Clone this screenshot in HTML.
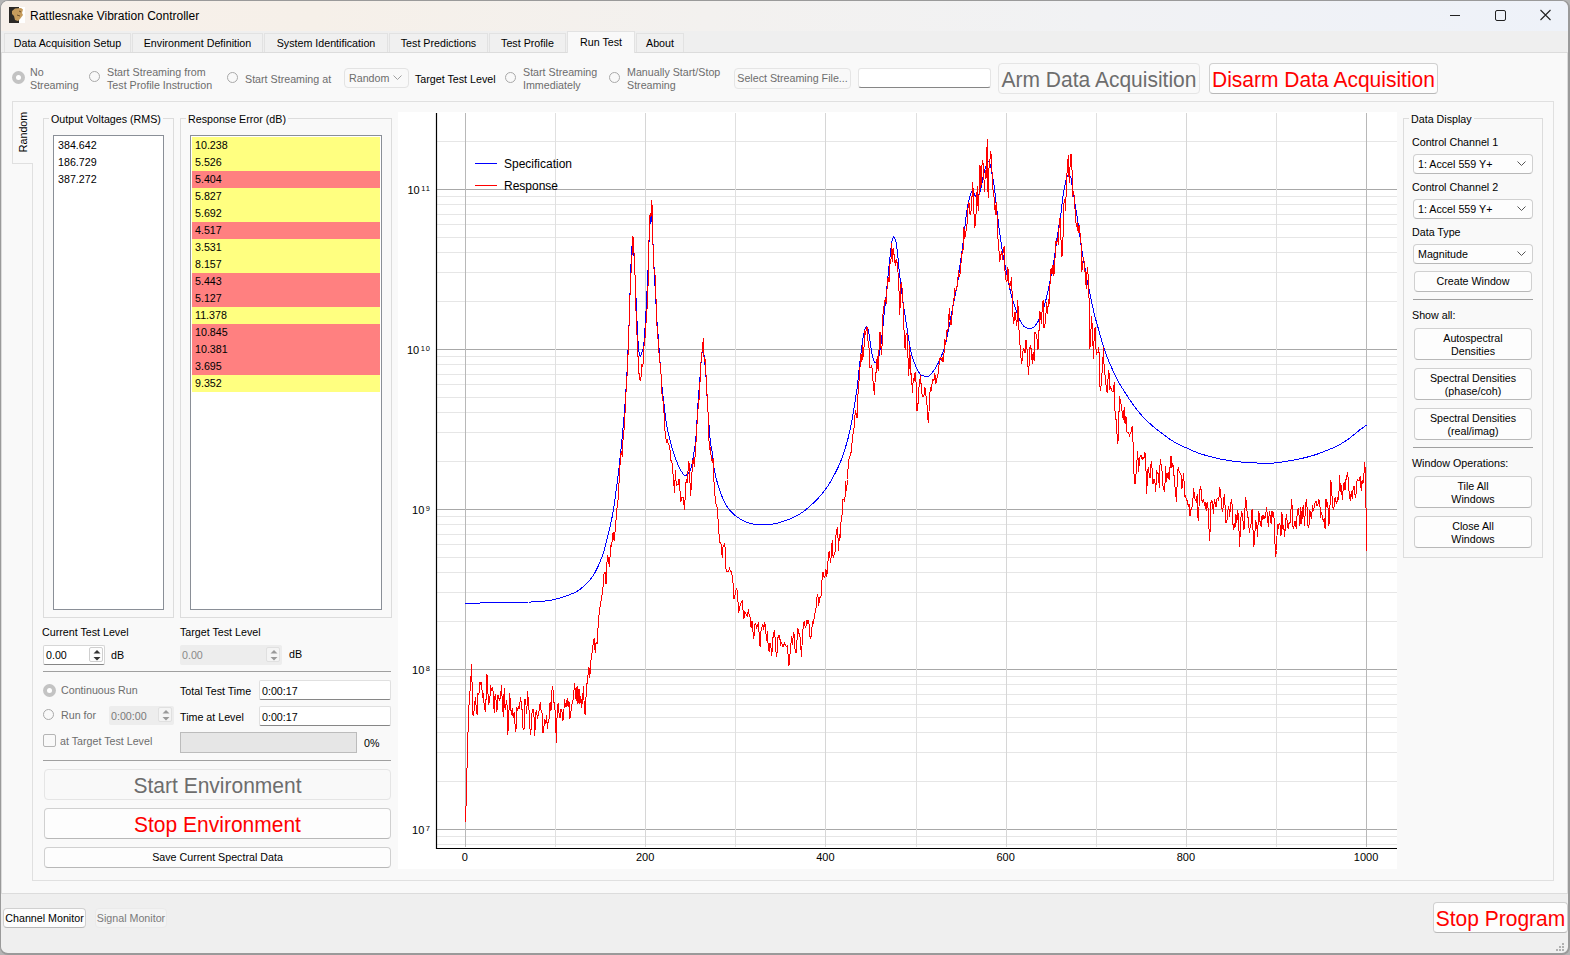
<!DOCTYPE html><html><head><meta charset="utf-8"><style>
*{margin:0;padding:0;box-sizing:border-box}
html,body{width:1570px;height:955px;overflow:hidden;background:#b5b5b5;font-family:"Liberation Sans", sans-serif;position:relative}
.t{position:absolute;white-space:nowrap;line-height:13px;font-family:"Liberation Sans", sans-serif}
.b{position:absolute;border:1px solid #d0d0d0;border-radius:4px;text-align:center;white-space:nowrap;font-family:"Liberation Sans", sans-serif;box-sizing:content-box}
#win{position:absolute;left:0;top:0;width:1570px;height:955px;background:#efefef;border:1px solid #9a9a9a;border-right-width:2px;border-bottom-width:2px;border-radius:8px}
#title{position:absolute;left:1px;top:1px;width:1567px;height:30px;border-radius:7px 7px 0 0;background:linear-gradient(90deg,#f7f0ea 0%,#f6f0e9 20%,#f3f1ef 45%,#f1f2f4 70%,#eef2f9 100%)}
.tab{position:absolute;top:33px;height:19px;background:#f0f0f0;border:1px solid #e2e2e2;border-bottom:none;font-size:10.7px;line-height:19px;text-align:center;white-space:nowrap}
.tab.sel{top:31px;height:22px;background:#f9f9f9;line-height:21px;z-index:2}
#pane{position:absolute;left:1px;top:52px;width:1567px;height:842px;background:#f9f9f9;border:1px solid #dcdcdc}
#inner{position:absolute;left:32px;top:101px;width:1522px;height:780px;background:#f9f9f9;border:1px solid #e0e0e0}
#vtab{position:absolute;left:12px;top:101px;width:21px;height:63px;background:#f9f9f9;border:1px solid #e0e0e0;border-right:none;z-index:2}
.grp{position:absolute;border:1px solid #dcdcdc}
.lst{position:absolute;background:#fff;border:1px solid #8a8f97}
</style></head><body><div id="win"></div><div id="title"></div><svg style="position:absolute;left:9px;top:7px" width="16" height="16"><rect width="16" height="16" fill="#fff"/><rect width="10" height="16" fill="#2b2825"/><path d="M3 4 L6 1.5 L12 1 L14 2.5 L13 6 L14 8 L11 12 L9 14 L6 13 L5 9 L3 7 Z" fill="#c59b5c"/><path d="M10 4 L12 5 M8 8 L11 9" stroke="#6b4e2a" stroke-width="1"/></svg><div class="t" style="left:30px;top:10px;color:#000;font-size:12px;">Rattlesnake Vibration Controller</div><svg style="position:absolute;left:1440px;top:0" width="130" height="31"><path d="M10 15.5 H20" stroke="#222" stroke-width="1"/><rect x="55.5" y="10.5" width="10" height="10" rx="1.5" fill="none" stroke="#222" stroke-width="1"/><path d="M100.5 10 L110.5 20 M110.5 10 L100.5 20" stroke="#222" stroke-width="1.1"/></svg><div class="tab" style="left:4px;width:127px">Data Acquisition Setup</div><div class="tab" style="left:132px;width:131px">Environment Definition</div><div class="tab" style="left:264px;width:124px">System Identification</div><div class="tab" style="left:389px;width:99px">Test Predictions</div><div class="tab" style="left:489px;width:77px">Test Profile</div><div class="tab" style="left:636px;width:48px">About</div><div class="tab sel" style="left:567px;width:68px">Run Test</div><div id="pane"></div><div style="position:absolute;left:12px;top:71px;width:13px;height:13px;border-radius:50%;background:#c3c3c3"><div style="position:absolute;left:4px;top:4px;width:5px;height:5px;border-radius:50%;background:#fff"></div></div><div class="t" style="left:30px;top:66px;color:#6d6d6d;font-size:10.7px;line-height:13px">No<br>Streaming</div><div style="position:absolute;left:89px;top:71px;width:11px;height:11px;border-radius:50%;border:1px solid #a9a9a9;background:#f9f9f9"></div><div class="t" style="left:107px;top:66px;color:#6d6d6d;font-size:10.7px;line-height:13px">Start Streaming from<br>Test Profile Instruction</div><div style="position:absolute;left:227px;top:72px;width:11px;height:11px;border-radius:50%;border:1px solid #a9a9a9;background:#f9f9f9"></div><div class="t" style="left:245px;top:73px;color:#6d6d6d;font-size:10.7px;">Start Streaming at</div><div class="b" style="left:344px;top:68px;width:63px;height:18px;background:#f9f9f9;border-color:#e3e3e3;border-bottom-color:#e3e3e3;color:#6d6d6d;text-align:left;line-height:18px;font-size:10.7px"><span style="padding-left:4px">Random</span><svg style="position:absolute;right:6px;top:6px" width="9" height="6"><path d="M0.5 0.5 L4.5 4.5 L8.5 0.5" fill="none" stroke="#a0a0a0" stroke-width="1"/></svg></div><div class="t" style="left:415px;top:73px;color:#000;font-size:10.7px;">Target Test Level</div><div style="position:absolute;left:505px;top:72px;width:11px;height:11px;border-radius:50%;border:1px solid #a9a9a9;background:#f9f9f9"></div><div class="t" style="left:523px;top:66px;color:#6d6d6d;font-size:10.7px;line-height:13px">Start Streaming<br>Immediately</div><div style="position:absolute;left:609px;top:72px;width:11px;height:11px;border-radius:50%;border:1px solid #a9a9a9;background:#f9f9f9"></div><div class="t" style="left:627px;top:66px;color:#6d6d6d;font-size:10.7px;line-height:13px">Manually Start/Stop<br>Streaming</div><div class="b" style="left:734px;top:68px;width:115px;height:19px;background:#f9f9f9;border-color:#e5e5e5;border-bottom-color:#e5e5e5;color:#6d6d6d;font-size:10.7px;line-height:19px;">Select Streaming File...</div><div style="position:absolute;left:858px;top:68px;width:133px;height:20px;background:#fff;border:1px solid #e5e5e5;border-bottom:1px solid #868686;border-radius:3px"></div><div class="b" style="left:998px;top:63px;width:200px;height:29px;background:#f9f9f9;border-color:#e5e5e5;border-bottom-color:#e5e5e5;color:#6d6d6d;font-size:21px;line-height:29px;"><span style="display:inline-block;transform:translateY(1px) scaleY(1.05)">Arm Data Acquisition</span></div><div class="b" style="left:1209px;top:63px;width:227px;height:29px;background:#fdfdfd;border-color:#d0d0d0;border-bottom-color:#b8b8b8;color:#ff0000;font-size:21px;line-height:29px;"><span style="display:inline-block;transform:translateY(1px) scaleY(1.05)">Disarm Data Acquisition</span></div><div id="inner"></div><div id="vtab"><div style="position:absolute;left:-18px;top:23px;width:56px;height:14px;transform:rotate(-90deg);font-size:10.7px;text-align:center;line-height:14px">Random</div></div><div class="grp" style="left:43px;top:118px;width:131px;height:500px"></div><div class="t" style="left:49px;top:113px;padding:0 2px;background:#f9f9f9;font-size:10.7px">Output Voltages (RMS)</div><div class="grp" style="left:180px;top:118px;width:212px;height:500px"></div><div class="t" style="left:186px;top:113px;padding:0 2px;background:#f9f9f9;font-size:10.7px">Response Error (dB)</div><div class="lst" style="left:53px;top:135px;width:111px;height:475px"></div><div class="lst" style="left:190px;top:135px;width:192px;height:475px"></div><div class="t" style="left:58px;top:139px;color:#000;font-size:10.7px;">384.642</div><div class="t" style="left:58px;top:156px;color:#000;font-size:10.7px;">186.729</div><div class="t" style="left:58px;top:173px;color:#000;font-size:10.7px;">387.272</div><div style="position:absolute;left:192px;top:137px;width:188px;height:17px;background:#ffff80"></div><div class="t" style="left:195px;top:139px;color:#000;font-size:10.7px;">10.238</div><div style="position:absolute;left:192px;top:154px;width:188px;height:17px;background:#ffff80"></div><div class="t" style="left:195px;top:156px;color:#000;font-size:10.7px;">5.526</div><div style="position:absolute;left:192px;top:171px;width:188px;height:17px;background:#ff8080"></div><div class="t" style="left:195px;top:173px;color:#000;font-size:10.7px;">5.404</div><div style="position:absolute;left:192px;top:188px;width:188px;height:17px;background:#ffff80"></div><div class="t" style="left:195px;top:190px;color:#000;font-size:10.7px;">5.827</div><div style="position:absolute;left:192px;top:205px;width:188px;height:17px;background:#ffff80"></div><div class="t" style="left:195px;top:207px;color:#000;font-size:10.7px;">5.692</div><div style="position:absolute;left:192px;top:222px;width:188px;height:17px;background:#ff8080"></div><div class="t" style="left:195px;top:224px;color:#000;font-size:10.7px;">4.517</div><div style="position:absolute;left:192px;top:239px;width:188px;height:17px;background:#ffff80"></div><div class="t" style="left:195px;top:241px;color:#000;font-size:10.7px;">3.531</div><div style="position:absolute;left:192px;top:256px;width:188px;height:17px;background:#ffff80"></div><div class="t" style="left:195px;top:258px;color:#000;font-size:10.7px;">8.157</div><div style="position:absolute;left:192px;top:273px;width:188px;height:17px;background:#ff8080"></div><div class="t" style="left:195px;top:275px;color:#000;font-size:10.7px;">5.443</div><div style="position:absolute;left:192px;top:290px;width:188px;height:17px;background:#ff8080"></div><div class="t" style="left:195px;top:292px;color:#000;font-size:10.7px;">5.127</div><div style="position:absolute;left:192px;top:307px;width:188px;height:17px;background:#ffff80"></div><div class="t" style="left:195px;top:309px;color:#000;font-size:10.7px;">11.378</div><div style="position:absolute;left:192px;top:324px;width:188px;height:17px;background:#ff8080"></div><div class="t" style="left:195px;top:326px;color:#000;font-size:10.7px;">10.845</div><div style="position:absolute;left:192px;top:341px;width:188px;height:17px;background:#ff8080"></div><div class="t" style="left:195px;top:343px;color:#000;font-size:10.7px;">10.381</div><div style="position:absolute;left:192px;top:358px;width:188px;height:17px;background:#ff8080"></div><div class="t" style="left:195px;top:360px;color:#000;font-size:10.7px;">3.695</div><div style="position:absolute;left:192px;top:375px;width:188px;height:17px;background:#ffff80"></div><div class="t" style="left:195px;top:377px;color:#000;font-size:10.7px;">9.352</div><div class="t" style="left:42px;top:626px;color:#000;font-size:10.7px;">Current Test Level</div><div style="position:absolute;left:43px;top:645px;width:62px;height:20px;background:#fff;border:1px solid #d6d6d6;border-bottom-color:#868686;border-radius:2px"></div><div class="t" style="left:46px;top:649px;color:#000;font-size:10.7px;">0.00</div><div style="position:absolute;left:89px;top:647px;width:14px;height:15px;background:#fdfdfd;border:1px solid #cfcfcf;border-radius:2px"></div><svg style="position:absolute;left:89px;top:647px" width="16" height="17"><path d="M4.5 6.5 L8 3 L11.5 6.5 Z" fill="#333"/><path d="M4.5 10 L8 13.5 L11.5 10 Z" fill="#333"/></svg><div class="t" style="left:111px;top:649px;color:#000;font-size:10.7px;">dB</div><div class="t" style="left:180px;top:626px;color:#000;font-size:10.7px;">Target Test Level</div><div style="position:absolute;left:180px;top:645px;width:102px;height:20px;background:#ededed;border-radius:2px"></div><div class="t" style="left:182px;top:649px;color:#8a8a8a;font-size:10.7px;">0.00</div><div style="position:absolute;left:266px;top:647px;width:14px;height:15px;background:#f4f4f4;border:1px solid #e0e0e0;border-radius:2px"></div><svg style="position:absolute;left:266px;top:647px" width="16" height="17"><path d="M4.5 6.5 L8 3 L11.5 6.5 Z" fill="#999"/><path d="M4.5 10 L8 13.5 L11.5 10 Z" fill="#999"/></svg><div class="t" style="left:289px;top:648px;color:#000;font-size:10.7px;">dB</div><div style="position:absolute;left:43px;top:671px;width:348px;height:1px;background:#a0a0a0"></div><div style="position:absolute;left:43px;top:684px;width:13px;height:13px;border-radius:50%;background:#c3c3c3"><div style="position:absolute;left:4px;top:4px;width:5px;height:5px;border-radius:50%;background:#fff"></div></div><div class="t" style="left:61px;top:684px;color:#6d6d6d;font-size:10.7px;">Continuous Run</div><div class="t" style="left:180px;top:685px;color:#000;font-size:10.7px;">Total Test Time</div><div style="position:absolute;left:259px;top:680px;width:132px;height:20px;background:#fff;border:1px solid #e0e0e0;border-bottom-color:#868686;border-radius:2px"></div><div class="t" style="left:262px;top:685px;color:#000;font-size:10.7px;">0:00:17</div><div style="position:absolute;left:43px;top:709px;width:11px;height:11px;border-radius:50%;border:1px solid #a9a9a9;background:#f9f9f9"></div><div class="t" style="left:61px;top:709px;color:#6d6d6d;font-size:10.7px;">Run for</div><div style="position:absolute;left:109px;top:706px;width:65px;height:19px;background:#ededed;border-radius:2px"></div><div class="t" style="left:111px;top:710px;color:#7a7a7a;font-size:10.7px;">0:00:00</div><div style="position:absolute;left:158px;top:707px;width:14px;height:15px;background:#f4f4f4;border:1px solid #e0e0e0;border-radius:2px"></div><svg style="position:absolute;left:158px;top:707px" width="16" height="17"><path d="M4.5 6.5 L8 3 L11.5 6.5 Z" fill="#999"/><path d="M4.5 10 L8 13.5 L11.5 10 Z" fill="#999"/></svg><div class="t" style="left:180px;top:711px;color:#000;font-size:10.7px;">Time at Level</div><div style="position:absolute;left:259px;top:706px;width:132px;height:20px;background:#fff;border:1px solid #e0e0e0;border-bottom-color:#868686;border-radius:2px"></div><div class="t" style="left:262px;top:711px;color:#000;font-size:10.7px;">0:00:17</div><div style="position:absolute;left:43px;top:734px;width:13px;height:13px;border:1px solid #b5b5b5;border-radius:2px;background:#f9f9f9"></div><div class="t" style="left:60px;top:735px;color:#6d6d6d;font-size:10.7px;">at Target Test Level</div><div style="position:absolute;left:180px;top:732px;width:177px;height:21px;background:#e6e6e6;border:1px solid #bcbcbc"></div><div class="t" style="left:364px;top:737px;color:#000;font-size:10.7px;">0%</div><div style="position:absolute;left:43px;top:760px;width:348px;height:1px;background:#a0a0a0"></div><div class="b" style="left:44px;top:769px;width:345px;height:29px;background:#f9f9f9;border-color:#e5e5e5;border-bottom-color:#e5e5e5;color:#6d6d6d;font-size:21px;line-height:29px;"><span style="display:inline-block;transform:translateY(1px) scaleY(1.05)">Start Environment</span></div><div class="b" style="left:44px;top:808px;width:345px;height:29px;background:#fdfdfd;border-color:#d0d0d0;border-bottom-color:#b8b8b8;color:#ff0000;font-size:21px;line-height:29px;"><span style="display:inline-block;transform:translateY(1px) scaleY(1.05)">Stop Environment</span></div><div class="b" style="left:44px;top:847px;width:345px;height:19px;background:#fdfdfd;border-color:#d0d0d0;border-bottom-color:#b8b8b8;color:#000;font-size:10.7px;line-height:19px;">Save Current Spectral Data</div><div style="position:absolute;left:398px;top:112px;width:999px;height:757px;background:#fff"></div><svg style="position:absolute;left:0;top:0" width="1570" height="955"><line x1="437" x2="1397" y1="844.5" y2="844.5" stroke="#e6e6e6" stroke-width="1"/><line x1="437" x2="1397" y1="836.5" y2="836.5" stroke="#e6e6e6" stroke-width="1"/><line x1="437" x2="1397" y1="829.5" y2="829.5" stroke="#a8a8a8" stroke-width="1"/><line x1="437" x2="1397" y1="781.5" y2="781.5" stroke="#e6e6e6" stroke-width="1"/><line x1="437" x2="1397" y1="752.5" y2="752.5" stroke="#e6e6e6" stroke-width="1"/><line x1="437" x2="1397" y1="732.5" y2="732.5" stroke="#e6e6e6" stroke-width="1"/><line x1="437" x2="1397" y1="717.5" y2="717.5" stroke="#e6e6e6" stroke-width="1"/><line x1="437" x2="1397" y1="704.5" y2="704.5" stroke="#e6e6e6" stroke-width="1"/><line x1="437" x2="1397" y1="694.5" y2="694.5" stroke="#e6e6e6" stroke-width="1"/><line x1="437" x2="1397" y1="684.5" y2="684.5" stroke="#e6e6e6" stroke-width="1"/><line x1="437" x2="1397" y1="676.5" y2="676.5" stroke="#e6e6e6" stroke-width="1"/><line x1="437" x2="1397" y1="669.5" y2="669.5" stroke="#a8a8a8" stroke-width="1"/><line x1="437" x2="1397" y1="621.5" y2="621.5" stroke="#e6e6e6" stroke-width="1"/><line x1="437" x2="1397" y1="592.5" y2="592.5" stroke="#e6e6e6" stroke-width="1"/><line x1="437" x2="1397" y1="572.5" y2="572.5" stroke="#e6e6e6" stroke-width="1"/><line x1="437" x2="1397" y1="557.5" y2="557.5" stroke="#e6e6e6" stroke-width="1"/><line x1="437" x2="1397" y1="544.5" y2="544.5" stroke="#e6e6e6" stroke-width="1"/><line x1="437" x2="1397" y1="534.5" y2="534.5" stroke="#e6e6e6" stroke-width="1"/><line x1="437" x2="1397" y1="524.5" y2="524.5" stroke="#e6e6e6" stroke-width="1"/><line x1="437" x2="1397" y1="516.5" y2="516.5" stroke="#e6e6e6" stroke-width="1"/><line x1="437" x2="1397" y1="509.5" y2="509.5" stroke="#a8a8a8" stroke-width="1"/><line x1="437" x2="1397" y1="461.5" y2="461.5" stroke="#e6e6e6" stroke-width="1"/><line x1="437" x2="1397" y1="432.5" y2="432.5" stroke="#e6e6e6" stroke-width="1"/><line x1="437" x2="1397" y1="412.5" y2="412.5" stroke="#e6e6e6" stroke-width="1"/><line x1="437" x2="1397" y1="397.5" y2="397.5" stroke="#e6e6e6" stroke-width="1"/><line x1="437" x2="1397" y1="384.5" y2="384.5" stroke="#e6e6e6" stroke-width="1"/><line x1="437" x2="1397" y1="374.5" y2="374.5" stroke="#e6e6e6" stroke-width="1"/><line x1="437" x2="1397" y1="364.5" y2="364.5" stroke="#e6e6e6" stroke-width="1"/><line x1="437" x2="1397" y1="356.5" y2="356.5" stroke="#e6e6e6" stroke-width="1"/><line x1="437" x2="1397" y1="349.5" y2="349.5" stroke="#a8a8a8" stroke-width="1"/><line x1="437" x2="1397" y1="301.5" y2="301.5" stroke="#e6e6e6" stroke-width="1"/><line x1="437" x2="1397" y1="272.5" y2="272.5" stroke="#e6e6e6" stroke-width="1"/><line x1="437" x2="1397" y1="252.5" y2="252.5" stroke="#e6e6e6" stroke-width="1"/><line x1="437" x2="1397" y1="237.5" y2="237.5" stroke="#e6e6e6" stroke-width="1"/><line x1="437" x2="1397" y1="224.5" y2="224.5" stroke="#e6e6e6" stroke-width="1"/><line x1="437" x2="1397" y1="214.5" y2="214.5" stroke="#e6e6e6" stroke-width="1"/><line x1="437" x2="1397" y1="204.5" y2="204.5" stroke="#e6e6e6" stroke-width="1"/><line x1="437" x2="1397" y1="196.5" y2="196.5" stroke="#e6e6e6" stroke-width="1"/><line x1="437" x2="1397" y1="189.5" y2="189.5" stroke="#a8a8a8" stroke-width="1"/><line x1="437" x2="1397" y1="141.5" y2="141.5" stroke="#e6e6e6" stroke-width="1"/><line x1="465.5" x2="465.5" y1="113" y2="847" stroke="#b8b8b8" stroke-width="1"/><line x1="555.5" x2="555.5" y1="113" y2="847" stroke="#e0e0e0" stroke-width="1"/><line x1="645.5" x2="645.5" y1="113" y2="847" stroke="#d6d6d6" stroke-width="1"/><line x1="735.5" x2="735.5" y1="113" y2="847" stroke="#e0e0e0" stroke-width="1"/><line x1="825.5" x2="825.5" y1="113" y2="847" stroke="#d6d6d6" stroke-width="1"/><line x1="916.5" x2="916.5" y1="113" y2="847" stroke="#e0e0e0" stroke-width="1"/><line x1="1006.5" x2="1006.5" y1="113" y2="847" stroke="#d6d6d6" stroke-width="1"/><line x1="1096.5" x2="1096.5" y1="113" y2="847" stroke="#e0e0e0" stroke-width="1"/><line x1="1186.5" x2="1186.5" y1="113" y2="847" stroke="#d6d6d6" stroke-width="1"/><line x1="1276.5" x2="1276.5" y1="113" y2="847" stroke="#e0e0e0" stroke-width="1"/><line x1="1366.5" x2="1366.5" y1="113" y2="847" stroke="#b8b8b8" stroke-width="1"/><line x1="436.5" x2="436.5" y1="113" y2="849" stroke="#000" stroke-width="1.2"/><line x1="436" x2="1397" y1="848.5" y2="848.5" stroke="#000" stroke-width="1.2"/><text x="464.9" y="861" text-anchor="middle" style="font-family:'Liberation Sans';font-size:11px">0</text><text x="645.1" y="861" text-anchor="middle" style="font-family:'Liberation Sans';font-size:11px">200</text><text x="825.4" y="861" text-anchor="middle" style="font-family:'Liberation Sans';font-size:11px">400</text><text x="1005.6" y="861" text-anchor="middle" style="font-family:'Liberation Sans';font-size:11px">600</text><text x="1185.9" y="861" text-anchor="middle" style="font-family:'Liberation Sans';font-size:11px">800</text><text x="1366.1" y="861" text-anchor="middle" style="font-family:'Liberation Sans';font-size:11px">1000</text><text x="431" y="834" text-anchor="end" style="font-family:'Liberation Sans';font-size:11px">10<tspan dx="1.5" dy="-3" style="font-size:7.5px;letter-spacing:1px">7</tspan></text><text x="431" y="674" text-anchor="end" style="font-family:'Liberation Sans';font-size:11px">10<tspan dx="1.5" dy="-3" style="font-size:7.5px;letter-spacing:1px">8</tspan></text><text x="431" y="514" text-anchor="end" style="font-family:'Liberation Sans';font-size:11px">10<tspan dx="1.5" dy="-3" style="font-size:7.5px;letter-spacing:1px">9</tspan></text><text x="431" y="354" text-anchor="end" style="font-family:'Liberation Sans';font-size:11px">10<tspan dx="1.5" dy="-3" style="font-size:7.5px;letter-spacing:1px">10</tspan></text><text x="431" y="194" text-anchor="end" style="font-family:'Liberation Sans';font-size:11px">10<tspan dx="1.5" dy="-3" style="font-size:7.5px;letter-spacing:1px">11</tspan></text><line x1="475" x2="497" y1="163.5" y2="163.5" stroke="#0000ff"/><line x1="475" x2="497" y1="185.5" y2="185.5" stroke="#ff0000"/><text x="504" y="168" style="font-family:'Liberation Sans';font-size:12px">Specification</text><text x="504" y="190" style="font-family:'Liberation Sans';font-size:12px">Response</text></svg><svg style="position:absolute;left:0;top:0" width="1570" height="955"><polyline points="465.4,603.2 466.3,603.2 467.2,603.2 468.1,603.2 469.0,603.1 469.9,603.1 470.8,603.1 471.7,603.1 472.6,603.1 473.5,603.1 474.4,603.0 475.3,603.0 476.2,603.0 477.1,603.0 478.0,603.0 478.9,603.0 479.8,603.0 480.7,602.9 481.6,602.9 482.5,602.9 483.4,602.9 484.3,602.9 485.2,602.9 486.1,602.8 487.0,602.8 487.9,602.8 488.8,602.8 489.7,602.8 490.6,602.8 491.5,602.8 492.4,602.7 493.3,602.7 494.2,602.7 495.1,602.7 496.0,602.7 496.9,602.7 497.8,602.6 498.7,602.6 499.6,602.6 500.5,602.6 501.4,602.6 502.3,602.6 503.3,602.5 504.2,602.5 505.1,602.5 506.0,602.5 506.9,602.5 507.8,602.5 508.7,602.5 509.6,602.4 510.5,602.4 511.4,602.4 512.3,602.4 513.2,602.4 514.1,602.4 515.0,602.4 515.9,602.3 516.8,602.3 517.7,602.3 518.6,602.3 519.5,602.3 520.4,602.3 521.3,602.2 522.2,602.2 523.1,602.2 524.0,602.2 524.9,602.1 525.8,602.1 526.7,602.1 527.6,602.1 528.5,602.0 529.4,602.0 530.3,602.0 531.2,602.0 532.1,601.9 533.0,601.9 533.9,601.8 534.8,601.8 535.7,601.7 536.6,601.7 537.5,601.6 538.4,601.6 539.3,601.5 540.2,601.4 541.1,601.3 542.0,601.3 542.9,601.2 543.8,601.1 544.7,601.0 545.6,600.9 546.5,600.8 547.4,600.7 548.3,600.6 549.2,600.4 550.1,600.3 551.0,600.1 551.9,600.0 552.8,599.8 553.7,599.6 554.6,599.4 555.5,599.2 556.4,599.0 557.3,598.8 558.2,598.6 559.1,598.3 560.0,598.0 560.9,597.7 561.8,597.4 562.7,597.1 563.6,596.8 564.5,596.5 565.4,596.2 566.3,595.9 567.2,595.6 568.1,595.2 569.0,594.9 569.9,594.6 570.8,594.2 571.7,593.8 572.6,593.5 573.5,593.1 574.4,592.6 575.3,592.2 576.2,591.7 577.1,591.2 578.0,590.6 579.0,590.0 579.9,589.4 580.8,588.7 581.7,588.0 582.6,587.2 583.5,586.5 584.4,585.7 585.3,584.9 586.2,584.0 587.1,583.1 588.0,582.2 588.9,581.2 589.8,580.1 590.7,579.0 591.6,577.8 592.5,576.5 593.4,575.2 594.3,573.7 595.2,572.1 596.1,570.4 597.0,568.6 597.9,566.7 598.8,564.7 599.7,562.6 600.6,560.4 601.5,558.1 602.4,555.6 603.3,553.0 604.2,550.1 605.1,547.0 606.0,543.3 606.9,539.3 607.8,535.6 608.7,532.1 609.6,528.5 610.5,524.8 611.4,520.6 612.3,516.1 613.2,511.1 614.1,505.6 615.0,499.3 615.9,492.1 616.8,485.3 617.7,478.9 618.6,471.9 619.5,463.4 620.4,454.6 621.3,446.0 622.2,436.9 623.1,427.4 624.0,417.4 624.9,406.4 625.8,392.5 626.7,378.4 627.6,361.5 628.5,337.5 629.4,316.4 630.3,281.6 631.2,259.5 632.1,245.2 633.0,245.9 633.9,253.6 634.8,270.6 635.7,289.8 636.6,311.4 637.5,332.7 638.4,347.7 639.3,354.3 640.2,356.8 641.1,355.1 642.0,351.9 642.9,349.1 643.8,345.1 644.7,332.9 645.6,319.0 646.5,301.9 647.4,282.9 648.3,263.5 649.2,236.3 650.1,223.2 651.0,214.5 651.9,219.5 652.8,239.5 653.8,263.6 654.7,280.7 655.6,294.7 656.5,316.0 657.4,326.7 658.3,338.1 659.2,351.0 660.1,362.8 661.0,374.3 661.9,385.8 662.8,394.1 663.7,401.7 664.6,409.9 665.5,417.0 666.4,423.3 667.3,428.4 668.2,432.5 669.1,436.3 670.0,439.8 670.9,443.3 671.8,447.2 672.7,450.4 673.6,453.2 674.5,455.7 675.4,458.1 676.3,460.4 677.2,462.8 678.1,465.0 679.0,467.1 679.9,469.0 680.8,470.5 681.7,471.9 682.6,473.2 683.5,474.4 684.4,475.1 685.3,475.4 686.2,475.2 687.1,474.5 688.0,473.6 688.9,472.3 689.8,470.8 690.7,469.0 691.6,466.4 692.5,461.2 693.4,455.2 694.3,450.0 695.2,444.5 696.1,435.4 697.0,420.6 697.9,404.8 698.8,392.8 699.7,382.1 700.6,368.1 701.5,357.7 702.4,350.0 703.3,350.1 704.2,356.2 705.1,365.3 706.0,377.1 706.9,394.0 707.8,409.3 708.7,421.0 709.6,432.6 710.5,443.7 711.4,447.6 712.3,453.2 713.2,461.4 714.1,468.3 715.0,473.0 715.9,477.2 716.8,480.8 717.7,484.1 718.6,487.1 719.5,489.9 720.4,492.4 721.3,494.8 722.2,497.0 723.1,499.0 724.0,500.9 724.9,502.7 725.8,504.4 726.7,505.9 727.6,507.4 728.6,508.7 729.5,509.9 730.4,511.0 731.3,511.9 732.2,512.9 733.1,513.7 734.0,514.5 734.9,515.3 735.8,516.0 736.7,516.6 737.6,517.3 738.5,517.9 739.4,518.5 740.3,519.1 741.2,519.6 742.1,520.1 743.0,520.6 743.9,521.0 744.8,521.4 745.7,521.8 746.6,522.2 747.5,522.5 748.4,522.8 749.3,523.1 750.2,523.4 751.1,523.6 752.0,523.9 752.9,524.0 753.8,524.1 754.7,524.2 755.6,524.3 756.5,524.3 757.4,524.3 758.3,524.3 759.2,524.3 760.1,524.3 761.0,524.3 761.9,524.3 762.8,524.2 763.7,524.2 764.6,524.2 765.5,524.2 766.4,524.2 767.3,524.2 768.2,524.1 769.1,524.1 770.0,524.1 770.9,524.1 771.8,524.0 772.7,524.0 773.6,523.9 774.5,523.8 775.4,523.6 776.3,523.5 777.2,523.3 778.1,523.0 779.0,522.8 779.9,522.5 780.8,522.2 781.7,521.9 782.6,521.7 783.5,521.4 784.4,521.0 785.3,520.7 786.2,520.4 787.1,520.1 788.0,519.7 788.9,519.4 789.8,519.0 790.7,518.6 791.6,518.2 792.5,517.8 793.4,517.4 794.3,516.9 795.2,516.5 796.1,516.0 797.0,515.5 797.9,515.0 798.8,514.5 799.7,514.0 800.6,513.4 801.5,512.8 802.4,512.2 803.3,511.6 804.3,510.9 805.2,510.2 806.1,509.5 807.0,508.7 807.9,507.9 808.8,507.2 809.7,506.4 810.6,505.6 811.5,504.7 812.4,503.9 813.3,503.1 814.2,502.2 815.1,501.3 816.0,500.4 816.9,499.5 817.8,498.6 818.7,497.6 819.6,496.6 820.5,495.6 821.4,494.5 822.3,493.5 823.2,492.4 824.1,491.2 825.0,490.0 825.9,488.8 826.8,487.5 827.7,486.2 828.6,484.7 829.5,483.3 830.4,481.7 831.3,480.2 832.2,478.6 833.1,477.0 834.0,475.4 834.9,473.7 835.8,472.0 836.7,470.2 837.6,468.4 838.5,466.5 839.4,464.4 840.3,462.3 841.2,460.0 842.1,457.5 843.0,454.9 843.9,452.2 844.8,449.5 845.7,446.6 846.6,443.6 847.5,440.4 848.4,437.0 849.3,433.2 850.2,429.1 851.1,424.6 852.0,419.8 852.9,414.8 853.8,409.4 854.7,403.8 855.6,398.1 856.5,392.3 857.4,385.8 858.3,377.6 859.2,367.7 860.1,360.1 861.0,353.2 861.9,346.1 862.8,339.6 863.7,334.6 864.6,330.5 865.5,327.9 866.4,326.5 867.3,327.6 868.2,329.9 869.1,334.7 870.0,341.4 870.9,347.4 871.8,353.3 872.7,356.9 873.6,359.8 874.5,361.9 875.4,362.6 876.3,362.0 877.2,360.5 878.1,358.4 879.1,355.5 880.0,350.4 880.9,344.5 881.8,337.4 882.7,329.3 883.6,319.1 884.5,310.1 885.4,303.0 886.3,294.0 887.2,284.3 888.1,274.9 889.0,265.9 889.9,257.8 890.8,249.7 891.7,242.7 892.6,238.7 893.5,236.5 894.4,237.3 895.3,239.6 896.2,243.1 897.1,249.5 898.0,257.5 898.9,268.0 899.8,276.8 900.7,283.8 901.6,290.9 902.5,298.4 903.4,305.1 904.3,310.7 905.2,316.3 906.1,322.3 907.0,328.4 907.9,334.3 908.8,340.1 909.7,345.3 910.6,350.2 911.5,354.1 912.4,357.1 913.3,359.7 914.2,362.1 915.1,364.4 916.0,366.7 916.9,368.7 917.8,370.3 918.7,371.9 919.6,373.4 920.5,374.6 921.4,375.3 922.3,375.6 923.2,375.9 924.1,376.1 925.0,376.3 925.9,376.4 926.8,376.5 927.7,376.5 928.6,376.3 929.5,375.7 930.4,374.8 931.3,373.8 932.2,372.6 933.1,371.5 934.0,370.3 934.9,369.0 935.8,367.5 936.7,365.9 937.6,364.3 938.5,362.6 939.4,360.7 940.3,358.8 941.2,356.6 942.1,354.3 943.0,351.8 943.9,349.0 944.8,346.0 945.7,342.8 946.6,339.2 947.5,335.0 948.4,330.3 949.3,325.5 950.2,320.8 951.1,316.1 952.0,311.3 952.9,306.5 953.9,301.8 954.8,297.4 955.7,293.0 956.6,288.4 957.5,283.3 958.4,277.3 959.3,270.7 960.2,264.1 961.1,257.5 962.0,250.8 962.9,244.1 963.8,237.2 964.7,228.9 965.6,220.1 966.5,213.4 967.4,207.6 968.3,202.8 969.2,198.8 970.1,195.6 971.0,193.2 971.9,191.4 972.8,191.3 973.7,192.7 974.6,194.7 975.5,196.4 976.4,197.2 977.3,196.8 978.2,195.7 979.1,193.9 980.0,191.8 980.9,189.1 981.8,184.0 982.7,178.3 983.6,174.1 984.5,170.7 985.4,167.8 986.3,165.2 987.2,162.6 988.1,161.3 989.0,162.0 989.9,163.8 990.8,167.0 991.7,172.6 992.6,177.1 993.5,181.9 994.4,187.8 995.3,195.6 996.2,204.6 997.1,212.0 998.0,219.4 998.9,226.8 999.8,233.6 1000.7,240.0 1001.6,246.4 1002.5,252.3 1003.4,257.2 1004.3,261.6 1005.2,265.9 1006.1,270.3 1007.0,274.8 1007.9,279.4 1008.8,283.7 1009.7,288.0 1010.6,292.2 1011.5,296.0 1012.4,299.2 1013.3,302.0 1014.2,304.6 1015.1,307.1 1016.0,309.7 1016.9,312.6 1017.8,315.5 1018.7,317.9 1019.6,319.7 1020.5,321.4 1021.4,323.0 1022.3,324.4 1023.2,325.5 1024.1,326.5 1025.0,327.1 1025.9,327.6 1026.8,328.0 1027.7,328.3 1028.7,328.5 1029.6,328.5 1030.5,328.4 1031.4,328.1 1032.3,327.7 1033.2,327.3 1034.1,326.8 1035.0,325.9 1035.9,324.8 1036.8,323.4 1037.7,321.9 1038.6,320.4 1039.5,318.6 1040.4,316.4 1041.3,314.0 1042.2,311.5 1043.1,309.0 1044.0,306.5 1044.9,303.6 1045.8,300.3 1046.7,296.7 1047.6,292.8 1048.5,288.6 1049.4,283.9 1050.3,279.1 1051.2,274.5 1052.1,270.3 1053.0,266.0 1053.9,261.1 1054.8,255.1 1055.7,248.3 1056.6,241.5 1057.5,235.1 1058.4,229.1 1059.3,223.3 1060.2,218.0 1061.1,212.2 1062.0,204.0 1062.9,196.8 1063.8,191.7 1064.7,186.6 1065.6,181.6 1066.5,178.5 1067.4,176.3 1068.3,174.8 1069.2,174.7 1070.1,175.8 1071.0,177.9 1071.9,183.9 1072.8,190.0 1073.7,195.5 1074.6,201.1 1075.5,206.9 1076.4,212.6 1077.3,218.0 1078.2,223.9 1079.1,230.4 1080.0,237.4 1080.9,244.1 1081.8,250.1 1082.7,255.4 1083.6,260.3 1084.5,265.2 1085.4,270.3 1086.3,275.6 1087.2,280.6 1088.1,285.2 1089.0,289.5 1089.9,293.6 1090.8,297.7 1091.7,302.1 1092.6,306.5 1093.5,310.7 1094.4,314.4 1095.3,317.8 1096.2,321.1 1097.1,324.3 1098.0,327.5 1098.9,330.7 1099.8,334.0 1100.7,337.2 1101.6,340.4 1102.5,343.5 1103.4,346.5 1104.4,349.4 1105.3,352.0 1106.2,354.5 1107.1,356.9 1108.0,359.2 1108.9,361.4 1109.8,363.6 1110.7,365.6 1111.6,367.7 1112.5,369.7 1113.4,371.7 1114.3,373.6 1115.2,375.6 1116.1,377.5 1117.0,379.3 1117.9,381.0 1118.8,382.6 1119.7,384.1 1120.6,385.6 1121.5,387.0 1122.4,388.4 1123.3,389.8 1124.2,391.2 1125.1,392.6 1126.0,394.0 1126.9,395.4 1127.8,396.8 1128.7,398.2 1129.6,399.6 1130.5,400.9 1131.4,402.2 1132.3,403.5 1133.2,404.8 1134.1,406.0 1135.0,407.2 1135.9,408.4 1136.8,409.6 1137.7,410.7 1138.6,411.8 1139.5,412.9 1140.4,414.0 1141.3,415.0 1142.2,416.0 1143.1,417.0 1144.0,417.9 1144.9,418.8 1145.8,419.7 1146.7,420.6 1147.6,421.5 1148.5,422.3 1149.4,423.1 1150.3,424.0 1151.2,424.8 1152.1,425.5 1153.0,426.3 1153.9,427.1 1154.8,427.8 1155.7,428.6 1156.6,429.3 1157.5,430.0 1158.4,430.7 1159.3,431.4 1160.2,432.1 1161.1,432.8 1162.0,433.4 1162.9,434.1 1163.8,434.8 1164.7,435.5 1165.6,436.2 1166.5,436.8 1167.4,437.5 1168.3,438.1 1169.2,438.8 1170.1,439.4 1171.0,440.0 1171.9,440.5 1172.8,441.1 1173.7,441.6 1174.6,442.2 1175.5,442.7 1176.4,443.2 1177.3,443.6 1178.2,444.1 1179.2,444.6 1180.1,445.0 1181.0,445.4 1181.9,445.9 1182.8,446.3 1183.7,446.7 1184.6,447.1 1185.5,447.5 1186.4,447.9 1187.3,448.3 1188.2,448.7 1189.1,449.1 1190.0,449.5 1190.9,449.9 1191.8,450.3 1192.7,450.7 1193.6,451.1 1194.5,451.4 1195.4,451.8 1196.3,452.2 1197.2,452.5 1198.1,452.9 1199.0,453.2 1199.9,453.5 1200.8,453.8 1201.7,454.1 1202.6,454.4 1203.5,454.7 1204.4,455.0 1205.3,455.3 1206.2,455.6 1207.1,455.8 1208.0,456.1 1208.9,456.3 1209.8,456.6 1210.7,456.8 1211.6,457.0 1212.5,457.3 1213.4,457.5 1214.3,457.7 1215.2,457.9 1216.1,458.1 1217.0,458.3 1217.9,458.5 1218.8,458.7 1219.7,458.9 1220.6,459.1 1221.5,459.2 1222.4,459.4 1223.3,459.6 1224.2,459.7 1225.1,459.9 1226.0,460.0 1226.9,460.2 1227.8,460.3 1228.7,460.5 1229.6,460.6 1230.5,460.7 1231.4,460.9 1232.3,461.0 1233.2,461.1 1234.1,461.2 1235.0,461.3 1235.9,461.4 1236.8,461.5 1237.7,461.6 1238.6,461.7 1239.5,461.8 1240.4,461.9 1241.3,462.0 1242.2,462.1 1243.1,462.2 1244.0,462.3 1244.9,462.3 1245.8,462.4 1246.7,462.5 1247.6,462.5 1248.5,462.6 1249.4,462.6 1250.3,462.7 1251.2,462.7 1252.1,462.8 1253.0,462.8 1253.9,462.9 1254.9,462.9 1255.8,462.9 1256.7,463.0 1257.6,463.0 1258.5,463.0 1259.4,463.1 1260.3,463.1 1261.2,463.1 1262.1,463.1 1263.0,463.2 1263.9,463.2 1264.8,463.2 1265.7,463.2 1266.6,463.3 1267.5,463.3 1268.4,463.3 1269.3,463.3 1270.2,463.2 1271.1,463.2 1272.0,463.2 1272.9,463.1 1273.8,463.0 1274.7,462.9 1275.6,462.8 1276.5,462.7 1277.4,462.6 1278.3,462.5 1279.2,462.3 1280.1,462.2 1281.0,462.1 1281.9,462.0 1282.8,461.9 1283.7,461.7 1284.6,461.6 1285.5,461.5 1286.4,461.3 1287.3,461.2 1288.2,461.0 1289.1,460.9 1290.0,460.7 1290.9,460.5 1291.8,460.4 1292.7,460.2 1293.6,460.0 1294.5,459.9 1295.4,459.7 1296.3,459.5 1297.2,459.3 1298.1,459.2 1299.0,459.0 1299.9,458.8 1300.8,458.6 1301.7,458.4 1302.6,458.2 1303.5,458.0 1304.4,457.8 1305.3,457.6 1306.2,457.4 1307.1,457.1 1308.0,456.9 1308.9,456.7 1309.8,456.4 1310.7,456.2 1311.6,455.9 1312.5,455.7 1313.4,455.4 1314.3,455.1 1315.2,454.8 1316.1,454.5 1317.0,454.2 1317.9,453.9 1318.8,453.6 1319.7,453.2 1320.6,452.9 1321.5,452.5 1322.4,452.2 1323.3,451.8 1324.2,451.5 1325.1,451.1 1326.0,450.8 1326.9,450.4 1327.8,450.0 1328.7,449.7 1329.7,449.3 1330.6,448.9 1331.5,448.5 1332.4,448.1 1333.3,447.7 1334.2,447.3 1335.1,446.9 1336.0,446.4 1336.9,446.0 1337.8,445.5 1338.7,445.1 1339.6,444.6 1340.5,444.1 1341.4,443.6 1342.3,443.0 1343.2,442.5 1344.1,441.9 1345.0,441.4 1345.9,440.8 1346.8,440.2 1347.7,439.5 1348.6,438.9 1349.5,438.2 1350.4,437.5 1351.3,436.8 1352.2,436.1 1353.1,435.3 1354.0,434.6 1354.9,433.9 1355.8,433.1 1356.7,432.4 1357.6,431.7 1358.5,430.9 1359.4,430.2 1360.3,429.5 1361.2,428.9 1362.1,428.2 1363.0,427.5 1363.9,426.9 1364.8,426.3 1365.7,425.8 1366.6,425.5" fill="none" stroke="#0000ff" stroke-width="1" shape-rendering="crispEdges"/><polyline points="465.4,822.0 466.3,798.0 467.2,760.0 468.1,729.0 469.0,705.0 469.9,693.0 470.8,680.0 471.7,664.0 472.6,714.3 473.5,715.4 474.4,707.8 475.3,697.4 476.2,707.5 477.1,715.0 478.0,693.3 478.9,695.1 479.8,681.7 480.7,683.9 481.6,682.8 482.5,697.7 483.4,693.1 484.3,708.2 485.2,710.0 486.1,698.5 487.0,674.4 487.9,692.6 488.8,703.3 489.7,701.7 490.6,684.6 491.5,691.0 492.4,687.6 493.3,692.5 494.2,712.7 495.1,693.9 496.0,700.3 496.9,711.9 497.8,694.9 498.7,697.1 499.6,701.1 500.5,697.4 501.4,685.5 502.3,701.5 503.3,716.6 504.2,688.0 505.1,709.9 506.0,704.4 506.9,700.3 507.8,734.9 508.7,718.6 509.6,692.8 510.5,704.9 511.4,715.0 512.3,708.4 513.2,717.7 514.1,712.2 515.0,724.4 515.9,732.4 516.8,706.9 517.7,710.7 518.6,707.1 519.5,709.3 520.4,697.3 521.3,702.3 522.2,711.2 523.1,729.8 524.0,729.3 524.9,698.8 525.8,702.6 526.7,714.4 527.6,691.3 528.5,703.5 529.4,715.2 530.3,735.4 531.2,728.0 532.1,711.6 533.0,709.0 533.9,714.7 534.8,735.8 535.7,713.0 536.6,711.3 537.5,719.0 538.4,714.1 539.3,709.9 540.2,702.0 541.1,711.2 542.0,712.8 542.9,733.2 543.8,728.4 544.7,718.8 545.6,723.6 546.5,715.1 547.4,729.1 548.3,719.5 549.2,718.7 550.1,701.8 551.0,710.5 551.9,690.8 552.8,686.0 553.7,702.8 554.6,702.6 555.5,719.2 556.4,743.1 557.3,706.7 558.2,703.4 559.1,714.0 560.0,718.3 560.9,709.5 561.8,709.4 562.7,721.2 563.6,716.2 564.5,699.3 565.4,705.9 566.3,706.5 567.2,697.9 568.1,706.5 569.0,701.5 569.9,719.0 570.8,712.9 571.7,706.8 572.6,700.2 573.5,699.1 574.4,682.7 575.3,690.3 576.2,701.3 577.1,685.7 578.0,703.7 579.0,689.2 579.9,704.4 580.8,696.1 581.7,707.7 582.6,698.4 583.5,686.1 584.4,710.9 585.3,714.7 586.2,692.9 587.1,682.5 588.0,675.5 588.9,667.0 589.8,677.7 590.7,661.8 591.6,657.2 592.5,647.9 593.4,642.5 594.3,637.6 595.2,652.7 596.1,641.9 597.0,643.9 597.9,629.9 598.8,616.5 599.7,609.3 600.6,601.8 601.5,599.2 602.4,591.7 603.3,584.2 604.2,572.0 605.1,572.5 606.0,584.4 606.9,563.1 607.8,554.9 608.7,562.9 609.6,566.6 610.5,545.7 611.4,546.3 612.3,540.2 613.2,531.6 614.1,540.5 615.0,531.8 615.9,521.2 616.8,509.0 617.7,505.7 618.6,489.5 619.5,475.3 620.4,458.1 621.3,450.9 622.2,456.6 623.1,438.4 624.0,430.5 624.9,415.7 625.8,396.0 626.7,380.0 627.6,368.4 628.5,338.5 629.4,316.4 630.3,284.0 631.2,270.1 632.1,253.2 633.0,236.3 633.9,250.9 634.8,266.5 635.7,302.1 636.6,327.8 637.5,344.1 638.4,365.7 639.3,377.2 640.2,381.0 641.1,376.7 642.0,363.8 642.9,366.9 643.8,346.7 644.7,342.7 645.6,329.2 646.5,315.5 647.4,303.7 648.3,277.8 649.2,229.9 650.1,213.0 651.0,216.5 651.9,200.4 652.8,239.3 653.8,268.1 654.7,270.6 655.6,282.5 656.5,318.1 657.4,331.3 658.3,342.0 659.2,356.2 660.1,363.7 661.0,373.6 661.9,393.0 662.8,399.0 663.7,406.0 664.6,427.1 665.5,435.3 666.4,442.5 667.3,439.8 668.2,443.5 669.1,445.3 670.0,450.4 670.9,460.1 671.8,460.1 672.7,471.0 673.6,480.0 674.5,492.7 675.4,470.0 676.3,485.5 677.2,484.5 678.1,484.9 679.0,479.0 679.9,489.0 680.8,502.0 681.7,497.5 682.6,497.4 683.5,497.9 684.4,509.6 685.3,495.9 686.2,478.7 687.1,483.1 688.0,471.4 688.9,461.2 689.8,479.6 690.7,495.6 691.6,479.8 692.5,462.2 693.4,457.8 694.3,467.0 695.2,454.5 696.1,441.0 697.0,424.3 697.9,409.5 698.8,402.6 699.7,389.6 700.6,369.8 701.5,352.7 702.4,351.1 703.3,338.3 704.2,361.6 705.1,359.1 706.0,375.2 706.9,392.9 707.8,404.8 708.7,436.7 709.6,449.0 710.5,448.0 711.4,460.1 712.3,462.0 713.2,458.2 714.1,484.2 715.0,496.3 715.9,503.7 716.8,504.4 717.7,515.3 718.6,525.7 719.5,542.7 720.4,542.2 721.3,545.0 722.2,557.9 723.1,546.4 724.0,545.3 724.9,543.5 725.8,568.4 726.7,571.6 727.6,571.9 728.6,571.1 729.5,568.8 730.4,571.2 731.3,571.7 732.2,575.5 733.1,583.9 734.0,598.8 734.9,595.3 735.8,590.3 736.7,588.8 737.6,593.5 738.5,612.5 739.4,608.9 740.3,604.7 741.2,602.5 742.1,600.6 743.0,609.7 743.9,619.1 744.8,612.4 745.7,613.3 746.6,615.5 747.5,616.6 748.4,609.1 749.3,615.9 750.2,617.3 751.1,627.7 752.0,621.0 752.9,631.3 753.8,639.4 754.7,625.5 755.6,622.8 756.5,628.0 757.4,626.8 758.3,622.5 759.2,634.8 760.1,647.4 761.0,630.9 761.9,627.1 762.8,624.0 763.7,630.1 764.6,622.5 765.5,625.2 766.4,640.7 767.3,631.3 768.2,645.5 769.1,651.7 770.0,642.7 770.9,646.4 771.8,656.2 772.7,639.7 773.6,633.4 774.5,630.4 775.4,641.5 776.3,656.6 777.2,651.5 778.1,636.1 779.0,634.8 779.9,638.8 780.8,644.6 781.7,643.0 782.6,646.1 783.5,646.8 784.4,642.9 785.3,644.5 786.2,646.9 787.1,646.3 788.0,654.3 788.9,665.8 789.8,656.2 790.7,646.0 791.6,636.5 792.5,644.7 793.4,632.3 794.3,635.5 795.2,652.4 796.1,652.5 797.0,640.5 797.9,628.5 798.8,633.1 799.7,633.0 800.6,644.5 801.5,656.5 802.4,637.4 803.3,624.5 804.3,621.0 805.2,627.1 806.1,625.6 807.0,619.7 807.9,624.3 808.8,619.8 809.7,635.4 810.6,638.6 811.5,634.5 812.4,621.1 813.3,624.4 814.2,618.1 815.1,612.6 816.0,607.8 816.9,597.2 817.8,594.3 818.7,605.7 819.6,598.0 820.5,597.3 821.4,595.6 822.3,572.7 823.2,572.4 824.1,577.3 825.0,576.3 825.9,569.5 826.8,576.8 827.7,566.3 828.6,552.2 829.5,552.0 830.4,563.3 831.3,555.8 832.2,539.6 833.1,557.5 834.0,555.3 834.9,554.1 835.8,536.3 836.7,530.0 837.6,527.0 838.5,551.2 839.4,533.6 840.3,537.7 841.2,518.8 842.1,514.8 843.0,498.8 843.9,499.7 844.8,501.4 845.7,481.5 846.6,490.5 847.5,479.5 848.4,461.9 849.3,458.3 850.2,454.9 851.1,452.2 852.0,442.8 852.9,434.4 853.8,431.3 854.7,418.3 855.6,410.0 856.5,417.0 857.4,417.2 858.3,383.8 859.2,380.0 860.1,365.2 861.0,354.4 861.9,362.1 862.8,344.9 863.7,356.7 864.6,330.3 865.5,335.0 866.4,328.6 867.3,326.7 868.2,344.3 869.1,348.4 870.0,367.3 870.9,367.9 871.8,365.2 872.7,377.6 873.6,386.6 874.5,395.1 875.4,373.4 876.3,372.0 877.2,356.2 878.1,370.5 879.1,348.1 880.0,332.2 880.9,346.9 881.8,354.6 882.7,317.1 883.6,307.4 884.5,303.8 885.4,297.9 886.3,303.7 887.2,284.6 888.1,277.2 889.0,282.3 889.9,264.1 890.8,263.9 891.7,242.8 892.6,262.0 893.5,248.0 894.4,258.0 895.3,266.0 896.2,258.7 897.1,263.0 898.0,272.4 898.9,287.7 899.8,314.9 900.7,284.9 901.6,281.8 902.5,295.8 903.4,307.8 904.3,341.1 905.2,350.0 906.1,333.3 907.0,333.8 907.9,355.4 908.8,376.3 909.7,345.5 910.6,374.0 911.5,373.7 912.4,393.2 913.3,377.8 914.2,380.6 915.1,372.5 916.0,381.8 916.9,411.4 917.8,407.5 918.7,390.2 919.6,382.0 920.5,375.5 921.4,389.5 922.3,396.2 923.2,396.7 924.1,394.7 925.0,387.5 925.9,395.4 926.8,401.1 927.7,418.6 928.6,423.3 929.5,398.0 930.4,387.6 931.3,389.2 932.2,382.8 933.1,379.1 934.0,380.5 934.9,373.4 935.8,384.0 936.7,378.4 937.6,377.6 938.5,370.2 939.4,361.2 940.3,356.8 941.2,360.1 942.1,357.5 943.0,361.9 943.9,354.6 944.8,339.5 945.7,344.9 946.6,330.5 947.5,331.3 948.4,327.4 949.3,308.0 950.2,323.5 951.1,324.5 952.0,314.8 952.9,306.1 953.9,299.7 954.8,290.0 955.7,291.7 956.6,287.2 957.5,285.8 958.4,269.7 959.3,277.0 960.2,273.1 961.1,261.6 962.0,253.3 962.9,252.7 963.8,226.6 964.7,238.8 965.6,234.1 966.5,227.9 967.4,220.4 968.3,202.8 969.2,203.4 970.1,214.6 971.0,211.2 971.9,198.8 972.8,181.9 973.7,207.8 974.6,226.9 975.5,225.2 976.4,205.6 977.3,186.3 978.2,211.1 979.1,193.1 980.0,165.2 980.9,187.5 981.8,166.7 982.7,159.8 983.6,169.6 984.5,192.1 985.4,170.4 986.3,177.8 987.2,139.2 988.1,197.5 989.0,168.0 989.9,160.0 990.8,151.3 991.7,164.6 992.6,186.9 993.5,194.5 994.4,198.9 995.3,214.6 996.2,201.9 997.1,216.1 998.0,239.3 998.9,249.1 999.8,261.5 1000.7,255.7 1001.6,250.8 1002.5,260.2 1003.4,247.7 1004.3,246.8 1005.2,276.6 1006.1,279.9 1007.0,281.6 1007.9,266.8 1008.8,281.7 1009.7,286.3 1010.6,284.0 1011.5,276.9 1012.4,301.4 1013.3,324.3 1014.2,320.4 1015.1,311.6 1016.0,320.3 1016.9,325.5 1017.8,300.4 1018.7,323.8 1019.6,340.9 1020.5,349.9 1021.4,364.4 1022.3,359.5 1023.2,348.6 1024.1,349.1 1025.0,353.0 1025.9,339.9 1026.8,345.0 1027.7,363.5 1028.7,375.4 1029.6,348.9 1030.5,344.6 1031.4,351.5 1032.3,364.3 1033.2,351.6 1034.1,361.0 1035.0,332.4 1035.9,333.6 1036.8,335.8 1037.7,349.7 1038.6,346.3 1039.5,312.0 1040.4,312.9 1041.3,323.8 1042.2,309.7 1043.1,300.4 1044.0,327.9 1044.9,324.8 1045.8,316.0 1046.7,302.2 1047.6,314.1 1048.5,298.8 1049.4,304.2 1050.3,274.7 1051.2,268.1 1052.1,274.3 1053.0,265.0 1053.9,275.8 1054.8,263.4 1055.7,242.4 1056.6,243.4 1057.5,237.6 1058.4,244.8 1059.3,220.4 1060.2,217.7 1061.1,242.4 1062.0,256.5 1062.9,241.9 1063.8,203.8 1064.7,199.1 1065.6,210.8 1066.5,181.3 1067.4,166.7 1068.3,155.1 1069.2,182.7 1070.1,165.0 1071.0,153.8 1071.9,166.2 1072.8,196.9 1073.7,191.1 1074.6,201.9 1075.5,216.7 1076.4,227.4 1077.3,221.8 1078.2,233.2 1079.1,224.9 1080.0,233.3 1080.9,239.1 1081.8,272.1 1082.7,263.0 1083.6,256.7 1084.5,265.3 1085.4,276.0 1086.3,288.8 1087.2,267.2 1088.1,274.9 1089.0,297.6 1089.9,348.6 1090.8,332.7 1091.7,316.4 1092.6,336.4 1093.5,358.5 1094.4,328.1 1095.3,327.9 1096.2,354.6 1097.1,352.9 1098.0,353.1 1098.9,347.2 1099.8,386.0 1100.7,391.0 1101.6,376.6 1102.5,369.6 1103.4,347.5 1104.4,374.1 1105.3,375.8 1106.2,386.9 1107.1,392.7 1108.0,379.3 1108.9,370.1 1109.8,390.0 1110.7,386.6 1111.6,390.6 1112.5,391.7 1113.4,391.9 1114.3,382.0 1115.2,417.9 1116.1,419.7 1117.0,433.5 1117.9,444.2 1118.8,416.1 1119.7,396.5 1120.6,403.0 1121.5,405.2 1122.4,414.9 1123.3,419.7 1124.2,406.9 1125.1,424.0 1126.0,416.3 1126.9,431.6 1127.8,433.0 1128.7,432.6 1129.6,435.5 1130.5,433.1 1131.4,431.0 1132.3,425.6 1133.2,445.5 1134.1,476.9 1135.0,483.7 1135.9,475.2 1136.8,462.8 1137.7,451.1 1138.6,471.5 1139.5,459.2 1140.4,456.0 1141.3,455.9 1142.2,459.4 1143.1,457.0 1144.0,458.5 1144.9,452.1 1145.8,463.6 1146.7,494.2 1147.6,471.7 1148.5,466.6 1149.4,477.1 1150.3,477.3 1151.2,460.9 1152.1,469.0 1153.0,484.2 1153.9,479.2 1154.8,480.0 1155.7,492.3 1156.6,471.2 1157.5,473.0 1158.4,473.3 1159.3,487.7 1160.2,458.6 1161.1,464.3 1162.0,471.0 1162.9,485.0 1163.8,489.9 1164.7,491.9 1165.6,466.3 1166.5,481.6 1167.4,474.8 1168.3,471.8 1169.2,480.4 1170.1,466.3 1171.0,456.1 1171.9,468.0 1172.8,462.9 1173.7,471.1 1174.6,483.9 1175.5,489.9 1176.4,501.7 1177.3,480.5 1178.2,466.8 1179.2,472.4 1180.1,473.1 1181.0,474.7 1181.9,489.1 1182.8,480.9 1183.7,472.9 1184.6,496.1 1185.5,495.8 1186.4,500.1 1187.3,500.8 1188.2,506.2 1189.1,504.2 1190.0,516.2 1190.9,509.7 1191.8,507.7 1192.7,503.3 1193.6,488.3 1194.5,497.0 1195.4,500.2 1196.3,501.7 1197.2,494.4 1198.1,521.1 1199.0,506.8 1199.9,490.1 1200.8,486.0 1201.7,499.2 1202.6,503.0 1203.5,499.5 1204.4,504.7 1205.3,502.2 1206.2,510.5 1207.1,501.8 1208.0,508.1 1208.9,527.3 1209.8,540.8 1210.7,503.5 1211.6,500.9 1212.5,502.0 1213.4,514.0 1214.3,499.5 1215.2,503.0 1216.1,507.0 1217.0,499.2 1217.9,498.7 1218.8,500.2 1219.7,487.3 1220.6,492.5 1221.5,504.9 1222.4,511.9 1223.3,506.8 1224.2,493.9 1225.1,505.8 1226.0,522.7 1226.9,521.5 1227.8,511.3 1228.7,505.6 1229.6,517.0 1230.5,506.6 1231.4,499.4 1232.3,506.4 1233.2,530.2 1234.1,523.5 1235.0,527.7 1235.9,513.6 1236.8,522.9 1237.7,510.1 1238.6,517.4 1239.5,547.4 1240.4,529.5 1241.3,511.3 1242.2,513.6 1243.1,522.0 1244.0,529.8 1244.9,509.4 1245.8,497.1 1246.7,509.1 1247.6,515.1 1248.5,520.4 1249.4,533.2 1250.3,525.3 1251.2,523.8 1252.1,508.8 1253.0,529.5 1253.9,546.9 1254.9,532.2 1255.8,522.0 1256.7,523.9 1257.6,537.0 1258.5,511.4 1259.4,514.9 1260.3,524.5 1261.2,526.6 1262.1,515.4 1263.0,519.5 1263.9,516.0 1264.8,518.3 1265.7,514.8 1266.6,507.2 1267.5,517.7 1268.4,527.0 1269.3,510.9 1270.2,516.0 1271.1,523.8 1272.0,510.7 1272.9,516.6 1273.8,511.9 1274.7,537.0 1275.6,557.0 1276.5,550.5 1277.4,524.1 1278.3,528.5 1279.2,523.2 1280.1,525.2 1281.0,535.6 1281.9,512.2 1282.8,529.0 1283.7,525.3 1284.6,537.4 1285.5,523.5 1286.4,513.7 1287.3,522.7 1288.2,529.0 1289.1,522.5 1290.0,523.4 1290.9,510.2 1291.8,498.8 1292.7,525.5 1293.6,529.4 1294.5,521.4 1295.4,521.2 1296.3,528.9 1297.2,512.9 1298.1,508.2 1299.0,515.0 1299.9,526.2 1300.8,506.8 1301.7,524.2 1302.6,508.4 1303.5,504.7 1304.4,526.0 1305.3,511.9 1306.2,499.2 1307.1,507.8 1308.0,525.4 1308.9,527.4 1309.8,509.7 1310.7,515.9 1311.6,517.8 1312.5,505.0 1313.4,511.1 1314.3,507.2 1315.2,501.3 1316.1,501.3 1317.0,506.0 1317.9,505.1 1318.8,499.1 1319.7,501.8 1320.6,517.5 1321.5,511.6 1322.4,517.8 1323.3,521.3 1324.2,518.4 1325.1,528.9 1326.0,498.7 1326.9,506.8 1327.8,502.2 1328.7,525.6 1329.7,519.0 1330.6,480.3 1331.5,485.0 1332.4,504.1 1333.3,509.4 1334.2,506.4 1335.1,497.1 1336.0,501.6 1336.9,503.2 1337.8,497.1 1338.7,499.7 1339.6,474.7 1340.5,491.6 1341.4,485.3 1342.3,500.1 1343.2,489.0 1344.1,482.5 1345.0,490.1 1345.9,480.1 1346.8,475.7 1347.7,472.2 1348.6,486.0 1349.5,496.9 1350.4,501.3 1351.3,490.7 1352.2,499.2 1353.1,488.6 1354.0,485.7 1354.9,494.5 1355.8,498.1 1356.7,482.1 1357.6,479.9 1358.5,480.9 1359.4,480.9 1360.3,475.6 1361.2,491.0 1362.1,480.4 1363.0,483.4 1363.9,474.4 1364.8,462.0 1365.7,485.0 1366.6,551.0" fill="none" stroke="#ff0000" stroke-width="1" shape-rendering="crispEdges"/></svg><div class="grp" style="left:1403px;top:118px;width:140px;height:440px"></div><div class="t" style="left:1409px;top:113px;padding:0 2px;background:#f9f9f9;font-size:10.7px">Data Display</div><div class="t" style="left:1412px;top:136px;color:#000;font-size:10.7px;">Control Channel 1</div><div class="b" style="left:1413px;top:154px;width:118px;height:18px;background:#fdfdfd;border-color:#d0d0d0;border-bottom-color:#b8b8b8;color:#000;text-align:left;line-height:18px;font-size:10.7px"><span style="padding-left:4px">1: Accel 559 Y+</span><svg style="position:absolute;right:6px;top:6px" width="9" height="6"><path d="M0.5 0.5 L4.5 4.5 L8.5 0.5" fill="none" stroke="#555" stroke-width="1"/></svg></div><div class="t" style="left:1412px;top:181px;color:#000;font-size:10.7px;">Control Channel 2</div><div class="b" style="left:1413px;top:199px;width:118px;height:18px;background:#fdfdfd;border-color:#d0d0d0;border-bottom-color:#b8b8b8;color:#000;text-align:left;line-height:18px;font-size:10.7px"><span style="padding-left:4px">1: Accel 559 Y+</span><svg style="position:absolute;right:6px;top:6px" width="9" height="6"><path d="M0.5 0.5 L4.5 4.5 L8.5 0.5" fill="none" stroke="#555" stroke-width="1"/></svg></div><div class="t" style="left:1412px;top:226px;color:#000;font-size:10.7px;">Data Type</div><div class="b" style="left:1413px;top:244px;width:118px;height:18px;background:#fdfdfd;border-color:#d0d0d0;border-bottom-color:#b8b8b8;color:#000;text-align:left;line-height:18px;font-size:10.7px"><span style="padding-left:4px">Magnitude</span><svg style="position:absolute;right:6px;top:6px" width="9" height="6"><path d="M0.5 0.5 L4.5 4.5 L8.5 0.5" fill="none" stroke="#555" stroke-width="1"/></svg></div><div class="b" style="left:1414px;top:271px;width:116px;height:19px;background:#fdfdfd;border-color:#d0d0d0;border-bottom-color:#b8b8b8;color:#000;font-size:10.7px;line-height:19px;">Create Window</div><div style="position:absolute;left:1413px;top:299px;width:120px;height:1px;background:#a0a0a0"></div><div class="t" style="left:1412px;top:309px;color:#000;font-size:10.7px;">Show all:</div><div class="b" style="left:1414px;top:328px;width:116px;height:30px;background:#fdfdfd;border-color:#d0d0d0;border-bottom-color:#b8b8b8;color:#000;font-size:10.7px;line-height:13px;padding-top:3px;height:27px">Autospectral<br>Densities</div><div class="b" style="left:1414px;top:368px;width:116px;height:30px;background:#fdfdfd;border-color:#d0d0d0;border-bottom-color:#b8b8b8;color:#000;font-size:10.7px;line-height:13px;padding-top:3px;height:27px">Spectral Densities<br>(phase/coh)</div><div class="b" style="left:1414px;top:408px;width:116px;height:30px;background:#fdfdfd;border-color:#d0d0d0;border-bottom-color:#b8b8b8;color:#000;font-size:10.7px;line-height:13px;padding-top:3px;height:27px">Spectral Densities<br>(real/imag)</div><div style="position:absolute;left:1413px;top:447px;width:120px;height:1px;background:#a0a0a0"></div><div class="t" style="left:1412px;top:457px;color:#000;font-size:10.7px;">Window Operations:</div><div class="b" style="left:1414px;top:476px;width:116px;height:30px;background:#fdfdfd;border-color:#d0d0d0;border-bottom-color:#b8b8b8;color:#000;font-size:10.7px;line-height:13px;padding-top:3px;height:27px">Tile All<br>Windows</div><div class="b" style="left:1414px;top:516px;width:116px;height:30px;background:#fdfdfd;border-color:#d0d0d0;border-bottom-color:#b8b8b8;color:#000;font-size:10.7px;line-height:13px;padding-top:3px;height:27px">Close All<br>Windows</div><div class="b" style="left:3px;top:908px;width:81px;height:18px;background:#fdfdfd;border-color:#d0d0d0;border-bottom-color:#b8b8b8;color:#000;font-size:10.7px;line-height:18px;">Channel Monitor</div><div class="b" style="left:95px;top:908px;width:70px;height:18px;background:#f3f3f3;border-color:#eaeaea;border-bottom-color:#eaeaea;color:#7a7a7a;font-size:10.7px;line-height:18px;">Signal Monitor</div><div class="b" style="left:1433px;top:902px;width:133px;height:29px;background:#fdfdfd;border-color:#d0d0d0;border-bottom-color:#b8b8b8;color:#ff0000;font-size:21px;line-height:29px;"><span style="display:inline-block;transform:translateY(1px) scaleY(1.05)">Stop Program</span></div><svg style="position:absolute;left:1556px;top:943px" width="10" height="10"><g fill="#b0b0b0"><rect x="6" y="0" width="2" height="2"/><rect x="3" y="3" width="2" height="2"/><rect x="6" y="3" width="2" height="2"/><rect x="0" y="6" width="2" height="2"/><rect x="3" y="6" width="2" height="2"/><rect x="6" y="6" width="2" height="2"/></g></svg></body></html>
